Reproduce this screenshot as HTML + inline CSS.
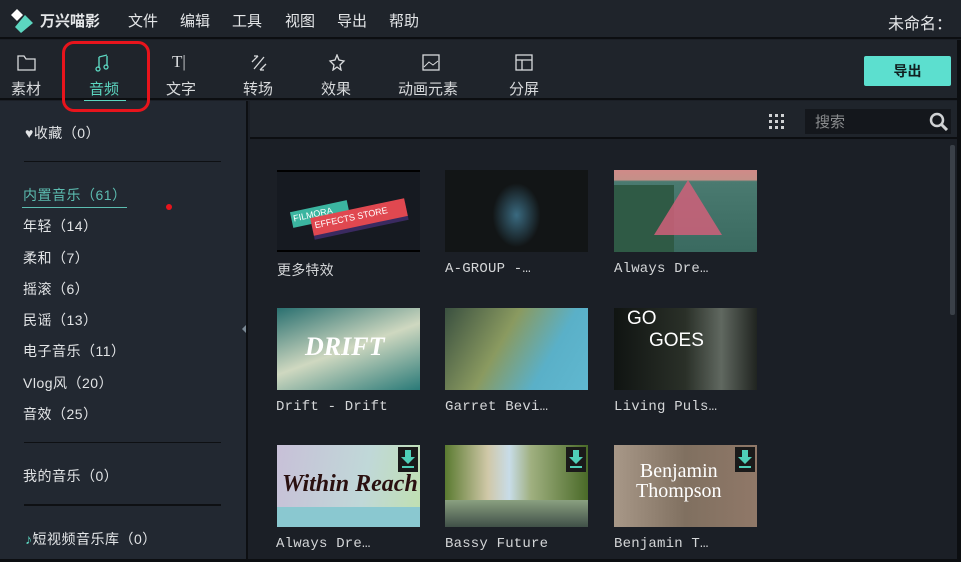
<!DOCTYPE html>
<html><head><meta charset="utf-8"><style>
*{margin:0;padding:0;box-sizing:border-box}
body{width:961px;height:562px;background:#1b1f26;overflow:hidden;position:relative;font-family:"Liberation Sans","Noto Sans CJK SC",sans-serif;color:#e6e8ea}
.a{position:absolute}
.top{left:0;top:0;width:961px;height:39px;background:#1f242b;border-bottom:2px solid #0c0e11}
.menu{top:10px;font-size:15px;color:#e4e6e8}
.tb{left:0;top:40px;width:961px;height:60px;background:#1f242b;border-bottom:2px solid #0c0e11}
.tl{font-size:15px;top:78px;color:#d8dadc}
.side{left:0;top:101px;width:248px;height:461px;background:#222831;border-right:2px solid #0d0f12}
.si{left:23px;font-size:14px;color:#e2e4e6;font-family:"Liberation Sans","Noto Sans CJK SC",sans-serif;letter-spacing:.5px}
.hr{left:24px;width:197px;height:1px;background:#0e1013}
.th{width:143px;height:82px;overflow:hidden}
.lb{font-size:14px;color:#d4d6d8;font-family:"Liberation Mono","Noto Sans CJK SC",monospace;letter-spacing:.2px}
.dl{right:2px;top:2px;width:20px;height:25px;background:#1a1a1a}
</style></head><body>
<div class="a top"></div>
<svg class="a" style="left:11px;top:9px" width="22" height="24"><path d="M6 0 L12 6 L6 12 L0 6Z" fill="#fff"/><path d="M14 6 L22 14 L10 24 L4 18Z" fill="#5cd6c0"/></svg>
<div class="a menu" style="left:40px;font-weight:bold">万兴喵影</div>
<div class="a menu" style="left:128px">文件</div>
<div class="a menu" style="left:180px">编辑</div>
<div class="a menu" style="left:232px">工具</div>
<div class="a menu" style="left:285px">视图</div>
<div class="a menu" style="left:337px">导出</div>
<div class="a menu" style="left:389px">帮助</div>
<div class="a menu" style="left:888px;font-size:16px">未命名：</div>
<div class="a tb"></div>
<svg class="a" style="left:17px;top:55px" width="20" height="16"><path d="M1 1h6l2 3h9v11H1z" fill="none" stroke="#d8dadc" stroke-width="1.3"/></svg>
<svg class="a" style="left:95px;top:54px" width="16" height="18"><path d="M4 3v11M12 2v10M4 3l8-2" fill="none" stroke="#5cd6c0" stroke-width="1.4"/><circle cx="3" cy="15" r="2" fill="none" stroke="#5cd6c0" stroke-width="1.3"/><circle cx="11" cy="13" r="2" fill="none" stroke="#5cd6c0" stroke-width="1.3"/></svg>
<div class="a" style="left:172px;top:52px;font-size:17px;color:#d8dadc;font-family:'Liberation Serif',serif">T|</div>
<svg class="a" style="left:250px;top:55px" width="18" height="16"><path d="M2 7l6-6M8 1h-4M16 9l-6 6M10 15h4M4 14l10-12" fill="none" stroke="#d8dadc" stroke-width="1.3"/></svg>
<svg class="a" style="left:328px;top:54px" width="18" height="17"><path d="M9 1l2 5 5 1-4 4 1 5-4-3-4 3 1-5-4-4 5-1z" fill="none" stroke="#d8dadc" stroke-width="1.3"/></svg>
<svg class="a" style="left:422px;top:54px" width="18" height="17"><rect x="1" y="1" width="16" height="15" fill="none" stroke="#d8dadc" stroke-width="1.3"/><path d="M2 13l5-5 4 3 5-4" fill="none" stroke="#d8dadc"/></svg>
<svg class="a" style="left:515px;top:54px" width="18" height="17"><rect x="1" y="1" width="16" height="15" fill="none" stroke="#d8dadc" stroke-width="1.3"/><path d="M1 6h16M7 6v10" stroke="#d8dadc" stroke-width="1.3"/></svg>
<div class="a tl" style="left:11px">素材</div>
<div class="a tl" style="left:89px;color:#5cd6c0">音频</div>
<div class="a" style="left:84px;top:100px;width:42px;height:2px;background:#5cd6c0"></div>
<div class="a tl" style="left:166px">文字</div>
<div class="a tl" style="left:243px">转场</div>
<div class="a tl" style="left:321px">效果</div>
<div class="a tl" style="left:398px">动画元素</div>
<div class="a tl" style="left:509px">分屏</div>
<div class="a" style="left:864px;top:56px;width:87px;height:30px;background:#5cdfcf;border-radius:2px;color:#102020;font-size:14px;font-weight:bold;text-align:center;line-height:30px">导出</div>
<div class="a side"></div>
<div class="a si" style="top:123px;left:25px">♥收藏（0）</div>
<div class="a hr" style="top:161px"></div>
<div class="a si" style="top:185px;color:#5cbcb0">内置音乐（61）</div>
<div class="a" style="left:22px;top:207px;width:105px;height:1px;background:#5cbcb0"></div>
<div class="a" style="left:166px;top:204px;width:6px;height:6px;border-radius:3px;background:#e8141c"></div>
<div class="a si" style="top:216px">年轻（14）</div>
<div class="a si" style="top:248px">柔和（7）</div>
<div class="a si" style="top:279px">摇滚（6）</div>
<div class="a si" style="top:310px">民谣（13）</div>
<div class="a si" style="top:341px">电子音乐（11）</div>
<div class="a si" style="top:373px">Vlog风（20）</div>
<div class="a si" style="top:404px">音效（25）</div>
<div class="a hr" style="top:442px"></div>
<div class="a si" style="top:466px">我的音乐（0）</div>
<div class="a hr" style="top:504px;height:2px"></div>
<div class="a si" style="top:529px;left:25px"><span style="color:#5cd6c0">♪</span>短视频音乐库（0）</div>
<div class="a" style="left:238px;top:325px;width:0;height:0;border:4px solid transparent;border-right-color:#7a8894"></div>
<div class="a" style="left:250px;top:101px;width:711px;height:38px;background:#1f242b;border-bottom:2px solid #0c0e11"></div>
<svg class="a" style="left:769px;top:114px" width="16" height="15"><g fill="#d0d2d4"><rect x="0" y="0" width="3" height="3"/><rect x="6" y="0" width="3" height="3"/><rect x="12" y="0" width="3" height="3"/><rect x="0" y="6" width="3" height="3"/><rect x="6" y="6" width="3" height="3"/><rect x="12" y="6" width="3" height="3"/><rect x="0" y="12" width="3" height="3"/><rect x="6" y="12" width="3" height="3"/><rect x="12" y="12" width="3" height="3"/></g></svg>
<div class="a" style="left:805px;top:109px;width:146px;height:25px;background:#14171c;color:#8a8c8e;font-size:15px;padding:2px 10px">搜索</div>
<svg class="a" style="left:929px;top:112px" width="20" height="19"><circle cx="8" cy="8" r="6" fill="none" stroke="#d0d2d4" stroke-width="2.5"/><path d="M12 12l6 6" stroke="#d0d2d4" stroke-width="3"/></svg>
<div class="a" style="left:950px;top:145px;width:5px;height:170px;background:#3a4048;border-radius:2px"></div>
<div class="a" style="left:957px;top:40px;width:4px;height:522px;background:#0c0e11"></div>
<div class="a" style="left:0;top:559px;width:961px;height:3px;background:#0c0e11"></div>

<div class="a th" style="left:277px;top:170px;background:#161a21;border-top:2px solid #000;border-bottom:2px solid #000">
<div class="a" style="left:14px;top:34px;width:58px;height:16px;background:#3bb5a0;transform:rotate(-12deg);font-size:9px;color:#fff;padding:2px">FILMORA</div>
<div class="a" style="left:34px;top:36px;width:96px;height:18px;background:#e04850;transform:rotate(-12deg);font-size:9px;color:#fff;padding:3px;box-shadow:0 4px 0 #3a2a60">EFFECTS STORE</div></div>
<div class="a th" style="left:445px;top:170px;background:radial-gradient(ellipse 30px 40px at 50% 55%,#3a6a80,#121516 80%)"></div>
<div class="a th" style="left:614px;top:170px;background:linear-gradient(180deg,#d08a88 0,#c49088 12%,#4a7a70 14%,#3a6a60 100%)"><div class="a" style="left:0;top:15px;width:60px;height:70px;background:#2f5a45"></div><div class="a" style="left:40px;top:10px;width:0;height:0;border-left:34px solid transparent;border-right:34px solid transparent;border-bottom:55px solid #d0607a;opacity:.85"></div></div>

<div class="a th" style="left:277px;top:308px;background:linear-gradient(160deg,#2a7070,#cfd8c0 50%,#2a7a78)"><div class="a" style="left:28px;top:24px;font-size:26px;font-weight:bold;font-style:italic;color:#fff;font-family:'Liberation Serif',serif">DRIFT</div></div>
<div class="a th" style="left:445px;top:308px;background:linear-gradient(120deg,#3a5040,#8a9a60 40%,#5ab0c8 70%,#60b8d0)"></div>
<div class="a th" style="left:614px;top:308px;background:linear-gradient(90deg,#101412,#2a3028 50%,#606860 75%,#202420)"><div class="a" style="left:13px;top:0;font-size:19px;color:#fff">GO</div><div class="a" style="left:35px;top:22px;font-size:19px;color:#fff">GOES</div></div>

<div class="a th" style="left:277px;top:445px;background:linear-gradient(100deg,#c8c0d8,#c0d8d8 60%,#c0e0b0)"><div class="a" style="left:5px;top:26px;font-size:24px;font-style:italic;font-weight:bold;color:#2a1010;font-family:'Liberation Serif',serif">Within Reach</div><div class="a" style="left:0;top:62px;width:143px;height:20px;background:#8ac8d0"></div><div class="a dl"></div></div>
<div class="a th" style="left:445px;top:445px;background:linear-gradient(90deg,#5a7a30,#d0c8a8 30%,#c8dce8 45%,#a0b080 60%,#4a6a28)"><div class="a" style="left:0;top:55px;width:143px;height:27px;background:linear-gradient(#8aa080,#405048)"></div><div class="a dl"></div></div>
<div class="a th" style="left:614px;top:445px;background:linear-gradient(90deg,#a89888,#807060 50%,#907868)"><div class="a" style="left:22px;top:16px;font-size:20px;color:#fff;font-family:'Liberation Serif',serif;line-height:20px;text-align:center">Benjamin<br>Thompson</div><div class="a dl"></div></div>

<svg class="a" style="left:398px;top:448px" width="20" height="22"><path d="M7 2h6v7h4l-7 7-7-7h4z" fill="#4fcfb8"/><path d="M4 19h12" stroke="#4fcfb8" stroke-width="2"/></svg>
<svg class="a" style="left:566px;top:448px" width="20" height="22"><path d="M7 2h6v7h4l-7 7-7-7h4z" fill="#4fcfb8"/><path d="M4 19h12" stroke="#4fcfb8" stroke-width="2"/></svg>
<svg class="a" style="left:735px;top:448px" width="20" height="22"><path d="M7 2h6v7h4l-7 7-7-7h4z" fill="#4fcfb8"/><path d="M4 19h12" stroke="#4fcfb8" stroke-width="2"/></svg>

<div class="a lb" style="left:277px;top:260px;font-size:14px;font-family:'Liberation Sans','Noto Sans CJK SC',sans-serif">更多特效</div>
<div class="a lb" style="left:445px;top:261px">A-GROUP -…</div>
<div class="a lb" style="left:614px;top:261px">Always Dre…</div>
<div class="a lb" style="left:276px;top:399px">Drift - Drift</div>
<div class="a lb" style="left:445px;top:399px">Garret Bevi…</div>
<div class="a lb" style="left:614px;top:399px">Living Puls…</div>
<div class="a lb" style="left:276px;top:536px">Always Dre…</div>
<div class="a lb" style="left:445px;top:536px">Bassy Future</div>
<div class="a lb" style="left:614px;top:536px">Benjamin T…</div>
<div class="a" style="left:62px;top:41px;width:88px;height:71px;border:3px solid #e8141c;border-radius:12px"></div>
</body></html>
